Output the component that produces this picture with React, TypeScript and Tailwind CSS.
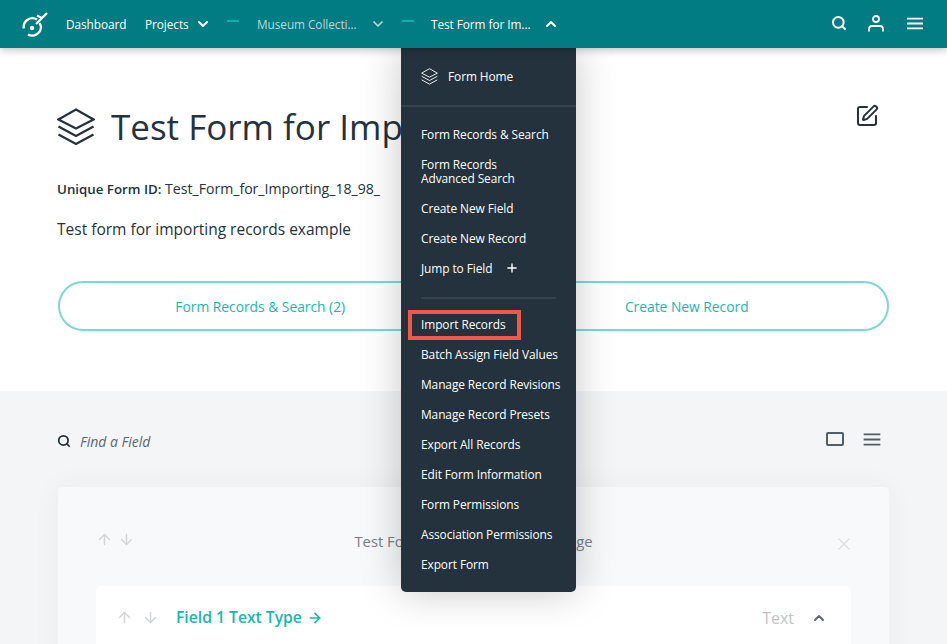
import { ChevronDown, ChevronUp, ChevronLeft, Search, Plus, ArrowUp, ArrowDown, ArrowRight, X, SquarePen } from "lucide-react";

const F = { fontFamily: '"Open Sans", "Noto Sans", sans-serif' };

function Layers({ className, sw = 1.5 }: { className?: string; sw?: number }) {
  return (
    <svg viewBox="0 0 38 38" fill="none" stroke="currentColor" strokeWidth={sw} strokeLinejoin="miter" className={className}>
      <path d="M19 1.5 36.5 11.5 19 20.5 1.5 11.5Z" />
      <path d="M1.5 18.5 19 28 36.5 18.5" />
      <path d="M1.5 26.5 19 36 36.5 26.5" />
    </svg>
  );
}

function Logo() {
  return (
    <svg viewBox="0 0 26 26" fill="none" stroke="#fff" strokeWidth="2.3" className="w-[26px] h-[26px]">
      <path d="M1.8 17.5A8.8 8.8 0 0 1 15 8.5" />
      <path d="M6 23.5A8.8 8.8 0 0 0 19 15.5L17.5 12" />
      <path d="M14 13 25 2" />
      <path d="M15 4.5 20.5 7.5" strokeWidth="2" />
      <circle cx="10" cy="17" r="2.2" fill="#fff" stroke="none" />
    </svg>
  );
}

function Menu({ className }: { className?: string }) {
  return (
    <svg viewBox="0 0 18 14" fill="none" stroke="currentColor" strokeWidth="2" className={className}>
      <path d="M0 1.5H18M0 7H18M0 12.5H18" />
    </svg>
  );
}

function Dash() {
  return <span className="block w-[12px] h-[2px] bg-[#00b5ad] -mt-[4px]" />;
}

const items1 = ["Form Records & Search", "Form Records\nAdvanced Search", "Create New Field", "Create New Record"];
const items2 = ["Batch Assign Field Values", "Manage Record Revisions", "Manage Record Presets", "Export All Records", "Edit Form Information", "Form Permissions", "Association Permissions", "Export Form"];

function DropMenu() {
  return (
    <div className="absolute left-[401px] top-[48px] w-[175px] h-[544px] bg-[#23323c] rounded-b-[5px] shadow-[0_0_40px_rgba(0,0,0,0.22)] text-white text-[11.9px] tracking-[-0.08px] z-10">
      <div className="h-[59px] flex items-center pl-[20px] gap-[10px] border-b-2 border-[#33434d]">
        <Layers className="w-[17px] h-[17px]" sw={2} />
        <span>Form Home</span>
      </div>
      <div className="pt-[12px] flex flex-col">
        {items1.map((t) => (
          <div key={t} className="px-[20px] py-[8px] leading-[14px] whitespace-pre-line">{t}</div>
        ))}
        <div className="px-[20px] py-[8px] leading-[14px] flex items-center gap-[13px]">
          Jump to Field <Plus size={14} strokeWidth={2.4} />
        </div>
      </div>
      <div className="mx-[20px] mt-[14px] h-[2px] bg-[#33434d]" />
      <div className="pt-[10px] flex flex-col">
        <div className="relative px-[20px] py-[8px] leading-[14px]">
          Import Records
          <span className="absolute left-[7px] top-[1px] w-[113px] h-[30px] border-[4px] border-[#f9564a]" />
        </div>
        {items2.map((t) => (
          <div key={t} className="px-[20px] py-[8px] leading-[14px] whitespace-nowrap">{t}</div>
        ))}
      </div>
    </div>
  );
}

export default function App() {
  return (
    <div style={F} className="relative w-[947px] h-[644px] overflow-hidden bg-[#f4f5f7] text-[#23323c]">
      <nav className="relative z-20 h-[48px] bg-[#007c82] shadow-[0_2px_8px_rgba(0,0,0,0.25)] flex items-center pl-[22px] pr-[24px] text-white text-[11.8px] font-medium tracking-[-0.05px]">
        <Logo />
        <span className="ml-[18px] w-[60px] whitespace-nowrap mt-[1px]">Dashboard</span>
        <span className="ml-[19px] w-[46px] whitespace-nowrap mt-[1px]">Projects</span>
        <ChevronDown size={16} strokeWidth={3} className="ml-[4px]" />
        <span className="ml-[16px]"><Dash /></span>
        <span className="ml-[18px] w-[104px] whitespace-nowrap text-[#b7d9da] mt-[1px]">Museum Collecti...</span>
        <ChevronDown size={16} strokeWidth={2.6} className="ml-[9px] text-[#b7d9da]" />
        <span className="ml-[16px]"><Dash /></span>
        <span className="ml-[17px] w-[103px] whitespace-nowrap mt-[1px]">Test Form for Im...</span>
        <ChevronUp size={16} strokeWidth={3} className="ml-[9px]" />
        <Search size={16} strokeWidth={3} className="ml-auto -mt-[2px]" />
        <svg viewBox="0 0 16 17" fill="none" stroke="currentColor" strokeWidth="1.8" className="ml-[21px] w-[16px] h-[17px] -mt-[2px]">
          <circle cx="8" cy="4" r="3" />
          <path d="M1 16.5V14a3 3 0 0 1 3-3h8a3 3 0 0 1 3 3v2.5" />
        </svg>
        <Menu className="ml-[23px] w-[16px] h-[13px] -mt-[2px]" />
      </nav>

      <DropMenu />

      <div className="absolute left-0 top-[48px] w-[44px] h-[48px] bg-white border-r border-b border-[#e8eaec] rounded-br-[5px] flex items-center justify-center">
        <ChevronLeft size={14} strokeWidth={3} className="text-[#5b6770]" />
      </div>

      <section className="h-[343px] bg-white pl-[57px] pr-[58px] relative">
        <div className="flex items-center pt-[60px]">
          <Layers className="w-[38px] h-[38px]" sw={2.2} />
          <h1 className="ml-[16px] -mt-[1px] text-[35px] leading-[38px] font-normal whitespace-nowrap">Test Form for Importing</h1>
          <SquarePen size={24} strokeWidth={2} className="ml-auto mr-[10px] -mt-[22px]" />
        </div>
        <p className="mt-[34px] text-[14.1px] leading-[18px]"><b className="font-semibold text-[13.3px]">Unique Form ID:</b> Test_Form_for_Importing_18_98_</p>
        <p className="mt-[21px] text-[15.5px] leading-[20px]">Test form for importing records example</p>
        <div className="mt-[42px] flex gap-[22px] ml-[1px]">
          {["Form Records & Search (2)", "Create New Record"].map((t) => (
            <div key={t} className="flex-1 h-[50px] pt-[2px] rounded-full border-2 border-[#7dd8d5] flex items-center justify-center text-[#16b8b0] text-[13.8px] font-medium">{t}</div>
          ))}
        </div>
      </section>

      <section className="pl-[57px] pr-[57px]">
        <div className="h-[96px] flex items-center pt-[4px]">
          <Search size={14} strokeWidth={3} />
          <span className="ml-[9px] text-[14px] italic text-[#5b6770]">Find a Field</span>
          <svg viewBox="0 0 18 14" fill="none" stroke="#4f5e68" strokeWidth="2" className="ml-auto w-[18px] h-[14px] -mt-[4px]">
            <rect x="1" y="1" width="16" height="12" rx="1" />
          </svg>
          <Menu className="ml-[19px] mr-[9px] w-[18px] h-[13px] text-[#4f5e68] -mt-[4px]" />
        </div>
        <div className="-mt-[1px] h-[200px] bg-[#f8f9fa] rounded-[5px] shadow-[0_0_30px_rgba(0,0,0,0.04)] border border-[#f1f2f4] px-[38px]">
          <div className="h-[99px] flex items-center relative">
            <div className="flex gap-[5px] text-[#d3d6d9] mt-[6px]">
              <ArrowUp size={17} strokeWidth={2.2} />
              <ArrowDown size={17} strokeWidth={2.2} />
            </div>
            <span className="absolute left-0 right-0 text-center text-[14.8px] text-[#7a7f84] mt-[9px]">Test Form for Importing Data Page</span>
            <X size={20} strokeWidth={1.5} className="ml-auto -mr-[3px] text-[#dcdfe2] mt-[15px]" />
          </div>
          <div className="h-[99px] bg-white rounded-[5px]">
            <div className="h-[63px] flex items-center pl-[20px] pr-[24px]">
              <ArrowUp size={17} strokeWidth={2.2} className="text-[#d3d6d9]" />
              <ArrowDown size={17} strokeWidth={2.2} className="ml-[9px] text-[#d3d6d9]" />
              <span className="ml-[17px] text-[15.7px] font-semibold text-[#16b8b0]">Field 1 Text Type</span>
              <ArrowRight size={16} strokeWidth={2.5} className="ml-[5px] text-[#16b8b0]" />
              <span className="ml-auto text-[16px] text-[#bfc4c8]">Text</span>
              <ChevronUp size={16} strokeWidth={3} className="ml-[17px] text-[#5b6770]" />
            </div>
          </div>
        </div>
      </section>
    </div>
  );
}
